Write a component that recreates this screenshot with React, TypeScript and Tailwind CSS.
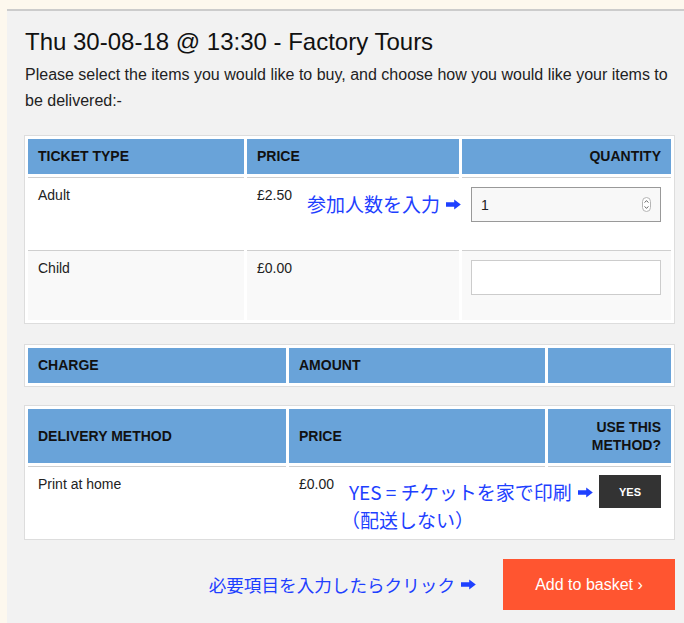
import React from "react";

function Arrow() {
  return (
    <svg width="15" height="11" viewBox="0 0 15 11" className="shrink-0">
      <path d="M0 3.3h8.2V0.4l6.6 5.1-6.6 5.1V7.7H0z" fill="#1e40ff" />
    </svg>
  );
}

function Spinner() {
  return (
    <svg width="9" height="15" viewBox="0 0 9 15">
      <rect x="0.5" y="0.5" width="8" height="14" rx="4" fill="#fff" stroke="#b5b5b5" />
      <path d="M2.6 5.6L4.5 3.6 6.4 5.6" stroke="#555" fill="none" strokeWidth="0.9" />
      <path d="M2.6 9.4L4.5 11.4 6.4 9.4" stroke="#555" fill="none" strokeWidth="0.9" />
    </svg>
  );
}

const head =
  "bg-[#69a3d9] flex items-center px-[10px] text-[14px] font-bold text-[#111] uppercase";
const cell = "border-t border-[#cfcfcf] px-[10px] text-[14px] leading-[18px] text-[#222]";

export default function App() {
  return (
    <div className="min-h-[623px] bg-[#fdf8ee] pt-[9px] pl-[7px] font-['Liberation_Sans',Arial,sans-serif] overflow-hidden">
      <div className="bg-[#f2f2f2] border-t-2 border-[#cccccc] pl-[17px] pr-[9px] pt-[15px] pb-[20px] min-h-[614px]">
        <h1 className="text-[24px] leading-[32px] text-[#111] ml-[1px]">
          Thu 30-08-18 @ 13:30 - Factory Tours
        </h1>
        <p className="mt-[4px] text-[16px] leading-[26px] text-[#222] ml-[1px]">
          Please select the items you would like to buy, and choose how you would like your items to be delivered:-
        </p>

        {/* Ticket table */}
        <div className="relative mt-[21px] border border-[#dddddd] bg-white p-[3px]">
          <div className="grid grid-cols-[216px_212px_209px] gap-[3px]">
            <div className={`${head} h-[35px]`}>Ticket Type</div>
            <div className={`${head} h-[35px]`}>Price</div>
            <div className={`${head} h-[35px] justify-end`}>Quantity</div>

            <div className={`${cell} h-[70px] pt-[8px]`}>Adult</div>
            <div className={`${cell} h-[70px] pt-[8px]`}>£2.50</div>
            <div className={`${cell} h-[70px] pt-[9px] pl-[9px]`}>
              <div className="w-[190px] h-[35px] border border-[#999] bg-[#f8f8f8] flex items-center justify-between pl-[9px] pr-[9px] text-[14px] text-[#222]">
                <span>1</span>
                <Spinner />
              </div>
            </div>

            <div className={`${cell} h-[70px] pt-[8px] bg-[#f9f9f9]`}>Child</div>
            <div className={`${cell} h-[70px] pt-[8px] bg-[#f9f9f9]`}>£0.00</div>
            <div className={`${cell} h-[70px] pt-[9px] pl-[9px] bg-[#f9f9f9]`}>
              <div className="w-[190px] h-[35px] border border-[#cccccc] bg-white" />
            </div>
          </div>
          <div className="absolute left-[282px] top-[56px] flex items-center gap-[6px] text-[19px] leading-[24px] text-[#1e40ff] font-['Noto_Sans_CJK_JP',sans-serif]">
            <span>参加人数を入力</span>
            <Arrow />
          </div>
        </div>

        {/* Charge table */}
        <div className="mt-[20px] border border-[#dddddd] bg-white p-[3px]">
          <div className="grid grid-cols-[258px_256px_123px] gap-[3px]">
            <div className={`${head} h-[35px]`}>Charge</div>
            <div className={`${head} h-[35px]`}>Amount</div>
            <div className={`${head} h-[35px]`}></div>
          </div>
        </div>

        {/* Delivery table */}
        <div className="relative mt-[18px] border border-[#dddddd] bg-white p-[3px]">
          <div className="grid grid-cols-[258px_256px_123px] gap-[3px]">
            <div className={`${head} h-[54px]`}>Delivery Method</div>
            <div className={`${head} h-[54px]`}>Price</div>
            <div className={`${head} h-[54px] justify-end text-right leading-[18px]`}>
              Use this
              <br />
              method?
            </div>

            <div className={`${cell} h-[70px] pt-[8px]`}>Print at home</div>
            <div className={`${cell} h-[70px] pt-[8px]`}>£0.00</div>
            <div className={`${cell} h-[70px] pt-[8px] flex justify-end`}>
              <div className="w-[62px] h-[33px] bg-[#333333] text-white text-[11px] font-bold flex items-center justify-center">
                YES
              </div>
            </div>
          </div>
          <div className="absolute left-[324px] top-[72px] text-[19px] leading-[28px] text-[#1e40ff] font-['Noto_Sans_CJK_JP',sans-serif]">
            <div className="flex items-center gap-[6px]">
              <span>YES = チケットを家で印刷</span>
              <Arrow />
            </div>
            <div className="-ml-[8px]">（配送しない）</div>
          </div>
        </div>

        {/* Bottom */}
        <div className="mt-[19px] flex items-center justify-end gap-[27px]">
          <div className="flex items-center gap-[6px] text-[17.6px] leading-[24px] text-[#1e40ff] font-['Noto_Sans_CJK_JP',sans-serif]">
            <span>必要項目を入力したらクリック</span>
            <Arrow />
          </div>
          <div className="w-[172px] h-[51px] bg-[#ff5530] text-white text-[16px] flex items-center justify-center">
            Add to basket ›
          </div>
        </div>
      </div>
    </div>
  );
}
